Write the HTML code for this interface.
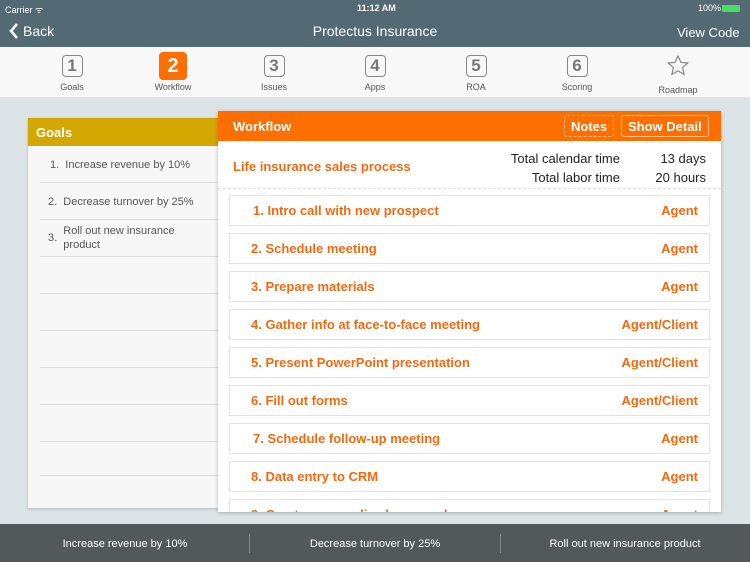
<!DOCTYPE html><html><head><style>
*{margin:0;padding:0;box-sizing:border-box}
body{width:750px;height:562px;overflow:hidden;background:#dde4e7;font-family:"Liberation Sans",sans-serif;position:relative}
.a{position:absolute}
.nav{left:0;top:0;width:750px;height:47px;background:#536a75;color:#fff}
.tabs{left:0;top:47px;width:750px;height:51px;background:#f8f8f8;border-bottom:1px solid #e0e0e0}
.tab{position:absolute;top:0;width:80px;text-align:center}
.box{display:inline-block;margin-top:8px;width:21px;height:22px;border:1.5px solid #888;border-radius:4px;color:#777;font-size:17px;font-weight:bold;line-height:19px}
.tab .l{font-size:9px;color:#555;margin-top:5px}
.goals{left:28px;top:118px;width:194px;height:390px;background:#f7f7f7;box-shadow:0 1px 3px rgba(0,0,0,.2)}
.gh{height:28px;background:#d4a700;color:#fff;font-weight:bold;font-size:13px;padding:7px 8px}
.gi{position:absolute;left:12px;width:182px;border-bottom:1px solid #ddd;font-size:11px;color:#555}
.wf{left:218px;top:111px;width:503px;height:401px;background:#fff;box-shadow:0 1px 4px rgba(0,0,0,.25);overflow:hidden}
.wh{height:30px;background:#ff6f00;color:#fff;font-weight:bold;font-size:13px;padding:8px 15px}
.btn{position:absolute;top:4px;height:22px;border:1px solid #ffc08a;border-radius:3px;font-size:13px;font-weight:bold;color:#fff;padding:3px 6px}
.row{position:absolute;left:11px;width:481px;height:31px;border:1px solid #e3e3e3;color:#f26a10;font-size:13px;font-weight:bold}
.row span{position:absolute;top:7px}
.row .r{right:11px}
.foot{left:0;top:524px;width:750px;height:38px;background:#53585b;color:#fff;font-size:11px}
.foot div{position:absolute;top:14px;text-align:center;width:250px}
</style></head><body>
<div class="a nav">
<div class="a" style="left:5px;top:3px;font-size:9px">Carrier ᯤ</div>
<div class="a" style="left:357px;top:3px;font-size:9px;font-weight:bold">11:12 AM</div>
<div class="a" style="left:698px;top:3px;font-size:9px">100%</div>
<div class="a" style="left:722px;top:5px;width:18px;height:7px;background:#4cd964;border-radius:1px"></div>
<svg class="a" style="left:9px;top:23px" width="10" height="16"><path d="M8 1L2 8l6 7" stroke="#fff" stroke-width="2.5" fill="none"/></svg>
<div class="a" style="left:23px;top:23px;font-size:14px">Back</div>
<div class="a" style="left:0;width:750px;top:23px;text-align:center;font-size:14px">Protectus Insurance</div>
<div class="a" style="left:677px;top:25px;font-size:13px">View Code</div>
</div>
<div class="a tabs">
<div class="tab" style="left:32px"><div class="box">1</div><div class="l">Goals</div></div>
<div class="tab" style="left:133px"><div class="box" style="background:#ff6f00;border-color:#ff6f00;color:#fff;width:28px;height:28px;margin-top:5px;line-height:26px;font-size:20px">2</div><div class="l" style="margin-top:2px">Workflow</div></div>
<div class="tab" style="left:234px"><div class="box">3</div><div class="l">Issues</div></div>
<div class="tab" style="left:335px"><div class="box">4</div><div class="l">Apps</div></div>
<div class="tab" style="left:436px"><div class="box">5</div><div class="l">ROA</div></div>
<div class="tab" style="left:537px"><div class="box">6</div><div class="l">Scoring</div></div>
<div class="tab" style="left:638px"><svg style="margin-top:7px" width="24" height="24" viewBox="0 0 24 24"><path d="M12 2l2.9 6.3 6.9.7-5.2 4.6 1.5 6.8L12 16.9l-6.1 3.5 1.5-6.8L2.2 9l6.9-.7z" fill="none" stroke="#888" stroke-width="1.2"/></svg><div class="l" style="margin-top:2px">Roadmap</div></div>
</div>
<div class="a goals"><div class="gh">Goals</div>
<div class="gi" style="top:28px;height:37px;padding:13px 10px">1.&nbsp; Increase revenue by 10%</div>
<div class="gi" style="top:65px;height:37px;padding:13px 8px">2.&nbsp; Decrease turnover by 25%</div>
<div class="gi" style="top:102px;height:37px;padding:4px 8px;display:flex;align-items:center"><span>3.&nbsp;&nbsp;</span><span style="line-height:14px">Roll out new insurance<br>product</span></div>
<div class="gi" style="top:139px;height:37px"></div><div class="gi" style="top:176px;height:37px"></div><div class="gi" style="top:213px;height:37px"></div><div class="gi" style="top:250px;height:37px"></div><div class="gi" style="top:287px;height:37px"></div><div class="gi" style="top:324px;height:34px"></div>
</div>
<div class="a wf">
<div class="wh">Workflow</div>
<div class="btn" style="left:346px;border-style:dashed">Notes</div>
<div class="btn" style="left:403px">Show Detail</div>
<div class="a" style="left:15px;top:48px;color:#f26a10;font-size:13px;font-weight:bold">Life insurance sales process</div>
<div class="a" style="left:270px;top:38px;width:132px;text-align:right;font-size:13px;line-height:19px;color:#222">Total calendar time<br>Total labor time</div>
<div class="a" style="left:420px;top:38px;width:68px;text-align:right;font-size:13px;line-height:19px;color:#222">13 days<br>20 hours</div>
<div class="a" style="left:0;top:77px;width:503px;border-top:1px dashed #ddd"></div>
<div class="row" style="top:84px"><span style="left:23px">1. Intro call with new prospect</span><span class="r">Agent</span></div>
<div class="row" style="top:122px"><span style="left:21px">2. Schedule meeting</span><span class="r">Agent</span></div>
<div class="row" style="top:160px"><span style="left:21px">3. Prepare materials</span><span class="r">Agent</span></div>
<div class="row" style="top:198px"><span style="left:21px">4. Gather info at face-to-face meeting</span><span class="r">Agent/Client</span></div>
<div class="row" style="top:236px"><span style="left:21px">5. Present PowerPoint presentation</span><span class="r">Agent/Client</span></div>
<div class="row" style="top:274px"><span style="left:21px">6. Fill out forms</span><span class="r">Agent/Client</span></div>
<div class="row" style="top:312px"><span style="left:23px">7. Schedule follow-up meeting</span><span class="r">Agent</span></div>
<div class="row" style="top:350px"><span style="left:21px">8. Data entry to CRM</span><span class="r">Agent</span></div>
<div class="row" style="top:388px"><span style="left:21px">9. Create personalized proposal</span><span class="r">Agent</span></div>
</div>
<div class="a foot">
<div style="left:0">Increase revenue by 10%</div>
<div style="left:250px">Decrease turnover by 25%</div>
<div style="left:500px">Roll out new insurance product</div>
<span class="a" style="left:249px;top:10px;height:19px;border-left:1px solid #888"></span>
<span class="a" style="left:500px;top:10px;height:19px;border-left:1px solid #888"></span>
</div>
</body></html>
